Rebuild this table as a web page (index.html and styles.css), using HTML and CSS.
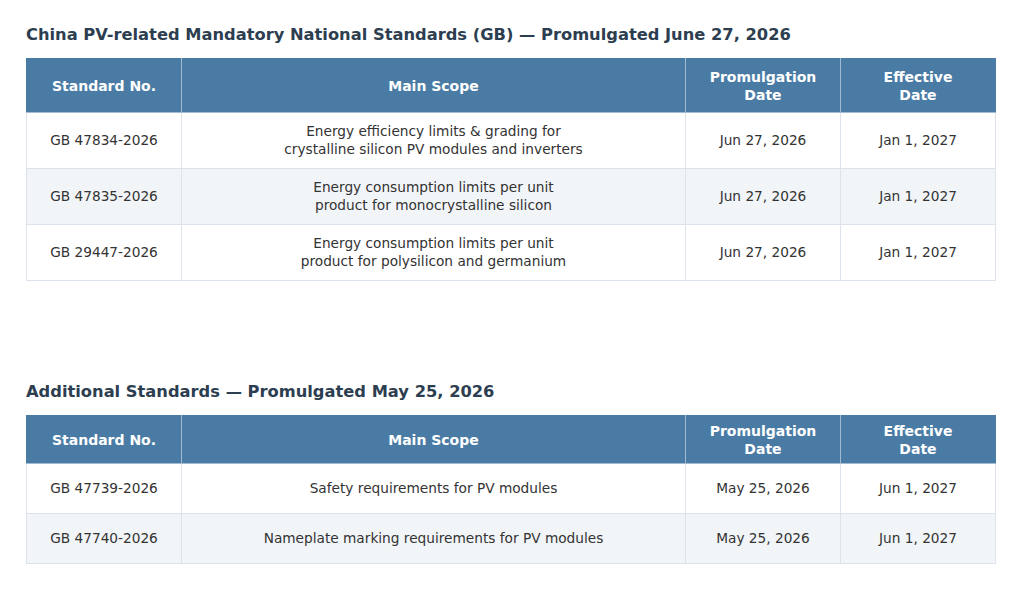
FILE: index.html
```html
<!DOCTYPE html>
<html lang="en">
<head>
<meta charset="utf-8">
<title>China PV Standards</title>
<link rel="stylesheet" href="styles.css">
</head>
<body>
<main class="page">
  <section class="block block-first">
    <h2 class="title">China PV-related Mandatory National Standards (GB) — Promulgated June 27, 2026</h2>
    <table class="std tall">
      <colgroup>
        <col class="c-no"><col class="c-scope"><col class="c-date"><col class="c-date">
      </colgroup>
      <thead>
        <tr><th>Standard No.</th><th>Main Scope</th><th>Promulgation<br>Date</th><th>Effective<br>Date</th></tr>
      </thead>
      <tbody>
        <tr><td>GB 47834-2026</td><td>Energy efficiency limits &amp; grading for<br>crystalline silicon PV modules and inverters</td><td>Jun 27, 2026</td><td>Jan 1, 2027</td></tr>
        <tr><td>GB 47835-2026</td><td>Energy consumption limits per unit<br>product for monocrystalline silicon</td><td>Jun 27, 2026</td><td>Jan 1, 2027</td></tr>
        <tr><td>GB 29447-2026</td><td>Energy consumption limits per unit<br>product for polysilicon and germanium</td><td>Jun 27, 2026</td><td>Jan 1, 2027</td></tr>
      </tbody>
    </table>
  </section>
  <section class="block block-second">
    <h2 class="title">Additional Standards — Promulgated May 25, 2026</h2>
    <table class="std short">
      <colgroup>
        <col class="c-no"><col class="c-scope"><col class="c-date"><col class="c-date">
      </colgroup>
      <thead>
        <tr><th>Standard No.</th><th>Main Scope</th><th>Promulgation<br>Date</th><th>Effective<br>Date</th></tr>
      </thead>
      <tbody>
        <tr><td>GB 47739-2026</td><td>Safety requirements for PV modules</td><td>May 25, 2026</td><td>Jun 1, 2027</td></tr>
        <tr><td>GB 47740-2026</td><td>Nameplate marking requirements for PV modules</td><td>May 25, 2026</td><td>Jun 1, 2027</td></tr>
      </tbody>
    </table>
  </section>
</main>
</body>
</html>
```
FILE: styles.css
```css
* { box-sizing: border-box; }
html, body { margin: 0; padding: 0; background: #ffffff; }
body {
  font-family: "DejaVu Sans", "Liberation Sans", sans-serif;
  color: #333333;
}
.page {
  width: 1024px;
  padding: 25px 29px 0 26px;
}
.block-second { margin-top: 101px; }
.title {
  margin: 0 0 13px 0;
  font-size: 16.3px;
  line-height: 20px;
  font-weight: bold;
  color: #2c3e50;
}
.std {
  width: 969px;
  border-collapse: collapse;
  table-layout: fixed;
  font-size: 13.7px;
  line-height: 17.5px;
}
.c-no { width: 155px; }
.c-scope { width: 504px; }
.c-date { width: 155px; }
.std th {
  background: #4a7ba5;
  color: #ffffff;
  font-size: 14px;
  line-height: 18px;
  font-weight: bold;
  text-align: center;
  vertical-align: middle;
  padding: 0 8px;
  border: 1px solid #4a7ba5;
  border-right-color: #a3bbd2;
  border-bottom-color: #a3bbd2;
}
.std th:last-child { border-right-color: #4a7ba5; }
.std td {
  text-align: center;
  vertical-align: middle;
  padding: 0 8px;
  border: 1px solid #dde3ea;
}
.std tbody tr:nth-child(even) td { background: #f2f5f8; }
.tall th { height: 54px; }
.tall td { height: 56px; }
.short th { height: 48px; }
.short td { height: 50px; }
```
